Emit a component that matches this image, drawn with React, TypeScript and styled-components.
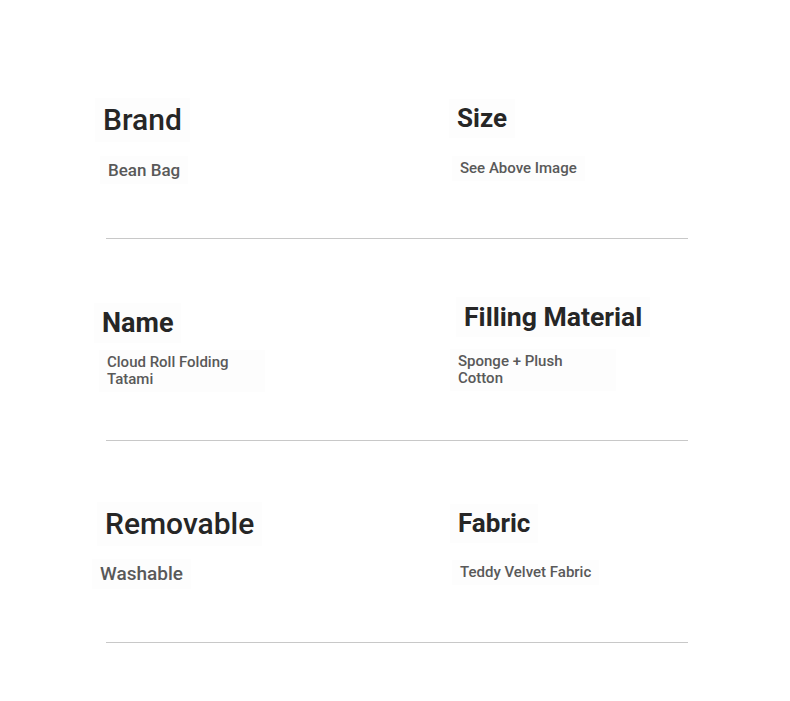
import styled, { createGlobalStyle } from 'styled-components';

const GlobalStyle = createGlobalStyle`
  body {
    margin: 0;
    background: #ffffff;
    font-family: Roboto, "Liberation Sans", Arial, sans-serif;
  }
`;

const Page = styled.main`
  width: 790px;
  padding: 37px 94px 0;
  box-sizing: border-box;
`;

const Row = styled.section`
  display: flex;
  flex-direction: column;
`;

const Grid = styled.div`
  display: grid;
  grid-template-columns: 356px 1fr;
  height: 201px;
`;

const Cell = styled.div<{ $top: number; $left: number }>`
  display: flex;
  flex-direction: column;
  align-items: flex-start;
  padding-top: ${(p) => p.$top}px;
  padding-left: ${(p) => p.$left}px;
`;

const Heading = styled.h3<{ $size: number; $weight: number }>`
  margin: -4px -8px;
  padding: 4px 8px;
  background: #fdfdfd;
  font-size: ${(p) => p.$size}px;
  line-height: ${(p) => Math.round(p.$size * 1.2)}px;
  font-weight: ${(p) => p.$weight};
  color: #262626;
`;

const ValueWrap = styled.div<{ $x: number }>`
  display: flex;
  margin-left: ${(p) => p.$x}px;
`;

const Value = styled.p<{ $size: number; $gap: number }>`
  margin: ${(p) => p.$gap - 4}px -8px -4px;
  padding: 4px 8px;
  background: #fdfdfd;
  font-size: ${(p) => p.$size}px;
  line-height: ${(p) => (p.$size > 16 ? Math.round(p.$size * 1.17) : 17)}px;
  font-weight: 500;
  color: #595959;
  max-width: 150px;
`;

const Divider = styled.hr`
  margin: 0 0 0 12px;
  width: 582px;
  border: none;
  border-top: 1px solid #c8c8c8;
`;

interface Spec {
  label: string;
  value: string;
  top: number;
  left: number;
  size: number;
  weight: number;
  valueSize: number;
  valueX: number;
  gap: number;
}

const rows: Spec[][] = [
  [
    { label: 'Brand', value: 'Bean Bag', top: 65, left: 9, size: 30, weight: 500, valueSize: 17, valueX: 5, gap: 22 },
    { label: 'Size', value: 'See Above Image', top: 65.5, left: 7, size: 26, weight: 700, valueSize: 15, valueX: 3, gap: 26.5 },
  ],
  [
    { label: 'Name', value: 'Cloud Roll Folding Tatami', top: 67.5, left: 8, size: 27, weight: 700, valueSize: 15, valueX: 5, gap: 15 },
    { label: 'Filling Material', value: 'Sponge + Plush Cotton', top: 61.5, left: 14, size: 26.6, weight: 700, valueSize: 15, valueX: -6, gap: 20.5 },
  ],
  [
    { label: 'Removable', value: 'Washable', top: 65, left: 11, size: 30, weight: 500, valueSize: 19, valueX: -5, gap: 20.5 },
    { label: 'Fabric', value: 'Teddy Velvet Fabric', top: 67.3, left: 8, size: 26, weight: 700, valueSize: 15, valueX: 2, gap: 24.4 },
  ],
];

export default function App() {
  return (
    <>
      <GlobalStyle />
      <Page>
        {rows.map((row, i) => (
          <Row key={i}>
            <Grid>
              {row.map((s) => (
                <Cell key={s.label} $top={s.top} $left={s.left}>
                  <Heading $size={s.size} $weight={s.weight}>
                    {s.label}
                  </Heading>
                  <ValueWrap $x={s.valueX}>
                    <Value $size={s.valueSize} $gap={s.gap}>
                      {s.value}
                    </Value>
                  </ValueWrap>
                </Cell>
              ))}
            </Grid>
            <Divider />
          </Row>
        ))}
      </Page>
    </>
  );
}
